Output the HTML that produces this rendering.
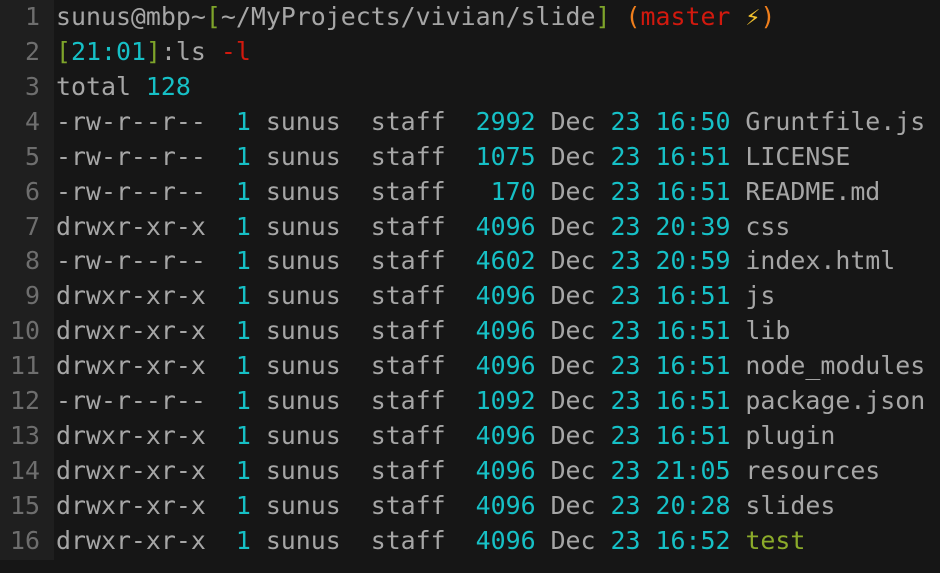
<!DOCTYPE html>
<html><head><meta charset="utf-8"><style>
html,body{margin:0;padding:0;background:#161616;width:940px;height:573px;overflow:hidden}
.g{position:absolute;left:0;top:0;width:54px;height:560px;background:#1f1f1f}
.w{position:absolute;left:0;top:0;font-family:"DejaVu Sans Mono","Liberation Mono",monospace;font-size:24.9px;line-height:34.93px;color:#a6a6a6}
.l{display:block;height:34.93px;white-space:pre}
.n{display:inline-block;width:40px;text-align:right;color:#6e6e6e;margin-right:16px}
.c{color:#16c0c6}.gr{color:#7ea42a}.r{color:#d2190e}.o{color:#f07f1c}.t{color:#8bab2a}.y{color:#f2c12e}
</style></head><body>
<div class="g"></div>
<div class="w">
<span class="l"><span class="n">1</span>sunus@mbp~<span class="gr">[</span>~/MyProjects/vivian/slide<span class="gr">]</span> <span class="o">(</span><span class="r">master</span> <span class="y">⚡</span><span class="o">)</span></span>
<span class="l"><span class="n">2</span><span class="gr">[</span><span class="c">21:01</span><span class="gr">]</span>:ls <span class="r">-l</span></span>
<span class="l"><span class="n">3</span>total <span class="c">128</span></span>
<span class="l"><span class="n">4</span>-rw-r--r--  <span class="c">1</span> sunus  staff  <span class="c">2992</span> Dec <span class="c">23</span> <span class="c">16:50</span> Gruntfile.js</span>
<span class="l"><span class="n">5</span>-rw-r--r--  <span class="c">1</span> sunus  staff  <span class="c">1075</span> Dec <span class="c">23</span> <span class="c">16:51</span> LICENSE</span>
<span class="l"><span class="n">6</span>-rw-r--r--  <span class="c">1</span> sunus  staff   <span class="c">170</span> Dec <span class="c">23</span> <span class="c">16:51</span> README.md</span>
<span class="l"><span class="n">7</span>drwxr-xr-x  <span class="c">1</span> sunus  staff  <span class="c">4096</span> Dec <span class="c">23</span> <span class="c">20:39</span> css</span>
<span class="l"><span class="n">8</span>-rw-r--r--  <span class="c">1</span> sunus  staff  <span class="c">4602</span> Dec <span class="c">23</span> <span class="c">20:59</span> index.html</span>
<span class="l"><span class="n">9</span>drwxr-xr-x  <span class="c">1</span> sunus  staff  <span class="c">4096</span> Dec <span class="c">23</span> <span class="c">16:51</span> js</span>
<span class="l"><span class="n">10</span>drwxr-xr-x  <span class="c">1</span> sunus  staff  <span class="c">4096</span> Dec <span class="c">23</span> <span class="c">16:51</span> lib</span>
<span class="l"><span class="n">11</span>drwxr-xr-x  <span class="c">1</span> sunus  staff  <span class="c">4096</span> Dec <span class="c">23</span> <span class="c">16:51</span> node_modules</span>
<span class="l"><span class="n">12</span>-rw-r--r--  <span class="c">1</span> sunus  staff  <span class="c">1092</span> Dec <span class="c">23</span> <span class="c">16:51</span> package.json</span>
<span class="l"><span class="n">13</span>drwxr-xr-x  <span class="c">1</span> sunus  staff  <span class="c">4096</span> Dec <span class="c">23</span> <span class="c">16:51</span> plugin</span>
<span class="l"><span class="n">14</span>drwxr-xr-x  <span class="c">1</span> sunus  staff  <span class="c">4096</span> Dec <span class="c">23</span> <span class="c">21:05</span> resources</span>
<span class="l"><span class="n">15</span>drwxr-xr-x  <span class="c">1</span> sunus  staff  <span class="c">4096</span> Dec <span class="c">23</span> <span class="c">20:28</span> slides</span>
<span class="l"><span class="n">16</span>drwxr-xr-x  <span class="c">1</span> sunus  staff  <span class="c">4096</span> Dec <span class="c">23</span> <span class="c">16:52</span> <span class="t">test</span></span>
</div>
</body></html>
